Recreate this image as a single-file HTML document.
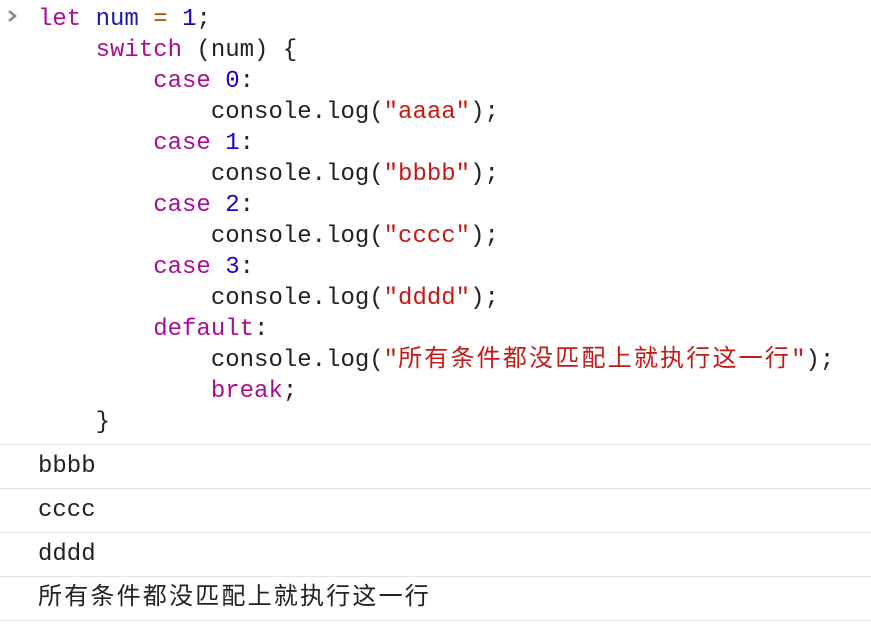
<!DOCTYPE html>
<html><head><meta charset="utf-8"><style>
body{margin:0;width:871px;height:625px;background:#fff;overflow:hidden;font-family:"Liberation Mono","Noto Sans CJK SC",monospace;font-size:24px;color:#222}
.code{position:absolute;left:38px;top:4px;line-height:31px;white-space:pre}
.k{color:#aa0d91}.n{color:#1c00cf}.v{color:#1a1aa6}.o{color:#a85700}.s{color:#c41a16}
.cj{letter-spacing:2.2px}
.arrow{position:absolute;left:6px;top:8px}
.out{position:absolute;left:0;width:871px;height:43px;border-top:1px solid #e4e4e4;line-height:44px;padding-left:38px;box-sizing:border-box;white-space:pre}
</style></head><body>
<svg class="arrow" width="14" height="16" viewBox="0 0 14 16"><path d="M3 3 L9 8 L3 13" stroke="#888" stroke-width="2.5" fill="none"/></svg>
<div class="code"><span class="k">let</span> <span class="v">num</span> <span class="o">=</span> <span class="n">1</span>;
    <span class="k">switch</span> (num) {
        <span class="k">case</span> <span class="n">0</span>:
            console.log(<span class="s">"aaaa"</span>);
        <span class="k">case</span> <span class="n">1</span>:
            console.log(<span class="s">"bbbb"</span>);
        <span class="k">case</span> <span class="n">2</span>:
            console.log(<span class="s">"cccc"</span>);
        <span class="k">case</span> <span class="n">3</span>:
            console.log(<span class="s">"dddd"</span>);
        <span class="k">default</span>:
            console.log(<span class="s">"<span class="cj">所有条件都没匹配上就执行这一行</span>"</span>);
            <span class="k">break</span>;
    }</div>
<div class="out" style="top:444px">bbbb</div>
<div class="out" style="top:488px">cccc</div>
<div class="out" style="top:532px">dddd</div>
<div class="out" style="top:576px"><span class="cj">所有条件都没匹配上就执行这一行</span></div>
<div style="position:absolute;left:0;top:620px;width:871px;border-top:1px solid #e4e4e4"></div>
</body></html>
